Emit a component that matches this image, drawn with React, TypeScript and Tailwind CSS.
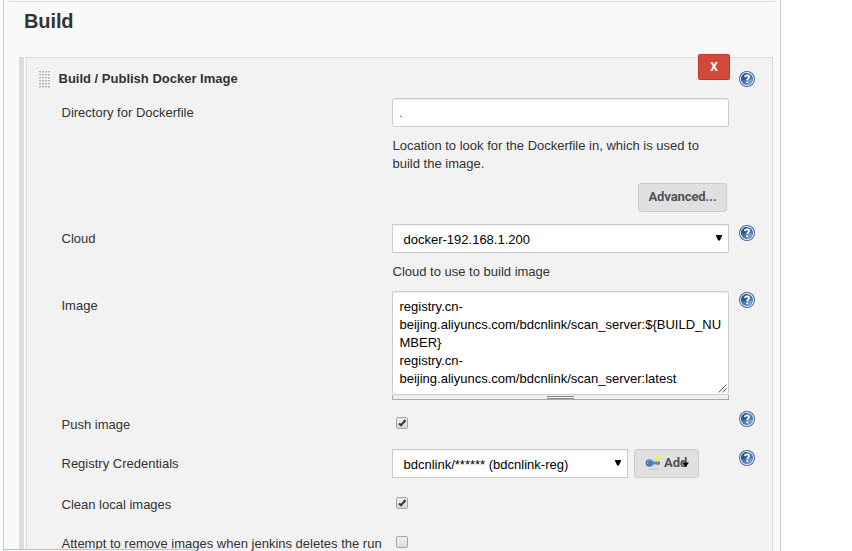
import type { ReactNode } from 'react';

function Help() {
  return (
    <svg className="block h-4 w-4" viewBox="0 0 16 16">
      <circle cx="8" cy="8" r="8" fill="#4169a3" />
      <circle cx="8" cy="8" r="7" fill="#f4f7fb" />
      <circle cx="8" cy="8" r="6.1" fill="#4d74ac" />
      <path d="M2.2 9.5A5.9 5.9 0 0 1 8 2.1v6z" fill="#2c5594" />
      <path d="M13.8 8A5.8 5.8 0 0 1 8 13.8L9 9z" fill="#7d9dca" />
      <path d="M5.9 6.1C6 3.7 10.2 3.7 10.1 6c0 1.5-2 1.5-2 3.2" fill="none" stroke="#fff" strokeWidth="1.7" />
      <rect x="7.2" y="10.4" width="1.8" height="1.8" fill="#fff" />
    </svg>
  );
}

function Check({ on = false }: { on?: boolean }) {
  return (
    <span className="ml-1 block h-[12px] w-[12px] rounded-[2px] border border-[#a6a6a6] bg-gradient-to-b from-[#f0f0f0] to-[#dcdcdc]">
      {on && (
        <svg className="block h-[10px] w-[10px]" viewBox="0 0 10 10">
          <path d="M1.9 5.5L4 7.3 8.5 2" fill="none" stroke="#3c3c3c" strokeWidth="2.2" />
        </svg>
      )}
    </span>
  );
}

function Row({ h, label, children, help, pad = 'pt-[6px]' }: { h: string; label: string; children?: ReactNode; help?: string; pad?: string }) {
  return (
    <div className={`flex shrink-0 items-start ${h}`}>
      <div className={`w-[331px] shrink-0 whitespace-nowrap pl-[0.5px] leading-[18px] ${pad}`}>{label}</div>
      <div className="w-[337px] shrink-0">{children}</div>
      {help !== undefined && <div className={`ml-[10px] ${help}`}><Help /></div>}
    </div>
  );
}

function Arrow() {
  return (
    <svg className="block h-[6px] w-[6px]" viewBox="0 0 6 6">
      <path d="M0 0h6v1L3.8 5.5H2.2L0 1z" fill="#000" />
    </svg>
  );
}

function Select({ w, text }: { w: string; text: string }) {
  return (
    <div className={`flex h-[29px] items-center justify-between border border-[#ccc] bg-white pl-[10.5px] pr-[6px] text-black shadow-[inset_0_1px_1px_rgba(0,0,0,0.075)] ${w}`}>
      <span className="pt-[2px]">{text}</span>
      <div className="pb-px"><Arrow /></div>
    </div>
  );
}

export default function App() {
  return (
    <div className="relative h-[551px] w-[852px] overflow-hidden bg-white font-['Liberation_Sans',Arial,sans-serif] text-[13px] text-[#333]">
      <div className="ml-[3px] flex h-full w-[778px] flex-col border-x border-[#ccc] bg-[#f9f9f9]">
        <div className="mx-[5px] mt-px h-px shrink-0 bg-[#ddd]" />
        <h1 className="h-[55px] shrink-0 pl-5 pt-[6px] text-[20px] font-bold leading-[26px] tracking-[-0.1px]">Build</h1>
        <div className="ml-[15px] flex h-[520px] w-[754px] shrink-0 bg-[#f9f9f9]">
          <div className="mr-[2px] w-[5px] shrink-0 bg-[#ddd]" />
          <div className="relative flex w-[747px] flex-col border border-[#d9d9d9] bg-[#f2f2f2]">
            <div className="absolute right-[42px] top-[-4px] flex h-[26px] w-8 items-center justify-center rounded-[2px] border border-[#c0392b] bg-[#d24939] font-['Roboto',sans-serif] text-[12px] font-bold text-white">X</div>
            <div className="flex h-10 shrink-0 items-start">
              <svg className="ml-[11px] mt-[12px] h-[18px] w-[13px] shrink-0" viewBox="0 0 13 18">
                <rect width="13" height="18" fill="#fafafa" />
                {[0, 1, 2, 3, 4, 5].map((r) =>
                  [0, 1, 2, 3].map((c) => <rect key={`${r}-${c}`} x={c * 3 + 1} y={r * 3 + 1} width="2" height="1.5" fill="#b0b0b0" />),
                )}
              </svg>
              <div className="ml-[7.5px] w-[661.5px] shrink-0 pt-[12px] font-bold leading-[18px]">Build / Publish Docker Image</div>
              <div className="ml-[19px] mt-[13px]"><Help /></div>
            </div>
            <div className="flex flex-col pl-[34px]">
              <Row h="h-[126px]" label="Directory for Dockerfile">
                <div className="flex h-[29px] items-center rounded-[3px] border border-[#ccc] bg-white pl-[6px] text-[#1583c4] shadow-[inset_0_1px_1px_rgba(0,0,0,0.075)]">.</div>
                <div className="mt-[10px] w-[325px] pl-[0.5px] leading-[18px]">Location to look for the Dockerfile in, which is used to<br />build the image.</div>
                <div className="ml-auto mr-[2px] mt-[10px] flex h-[29px] w-[89px] items-center justify-center rounded-[3px] border border-[#ccc] bg-[#e0e0e0] pb-px font-['Roboto',sans-serif] text-[13px] font-bold tracking-[-0.1px] text-[#4d545d]">Advanced...</div>
              </Row>
              <Row h="h-[67px]" label="Cloud" help="pt-px">
                <Select w="w-[337px]" text="docker-192.168.1.200" />
                <div className="mt-[10px] pl-[0.5px] leading-[18px]">Cloud to use to build image</div>
              </Row>
              <Row h="h-[120px]" label="Image" help="pt-px">
                <div className="relative h-[104px] rounded-[3px] border border-[#ccc] bg-white pl-[6.5px] pt-[6px] leading-[18px] text-black shadow-[inset_0_1px_1px_rgba(0,0,0,0.075)]">
                  registry.cn-<br />beijing.aliyuncs.com/bdcnlink/scan_server:$&#123;BUILD_NU<br />MBER&#125;<br />registry.cn-<br />beijing.aliyuncs.com/bdcnlink/scan_server:latest
                  <svg className="absolute bottom-[1px] right-[1px] h-[9px] w-[9px]" viewBox="0 0 9 9">
                    <path d="M.5 8.5l8-8M4.5 8.5l4-4" stroke="#555" />
                  </svg>
                </div>
                <div className="flex h-[5px] flex-col items-center border-x border-b border-[#aaa] bg-[#eee] pt-px">
                  <div className="h-[3px] w-[27px] border-y border-[#8b8b83]" />
                </div>
              </Row>
              <Row h="h-[38px]" label="Push image" help="pt-0" pad="pt-[5px]">
                <div className="pt-[6px]"><Check on /></div>
              </Row>
              <Row h="h-[41px]" label="Registry Credentials" help="pt-px">
                <div className="flex gap-[6px]">
                  <Select w="w-[236px]" text="bdcnlink/****** (bdcnlink-reg)" />
                  <div className="relative flex h-[29px] w-[65px] items-center rounded-[3px] border border-[#ccc] bg-[#e0e0e0] pb-px pl-[10px] font-['Roboto',sans-serif] font-bold text-[#4d545d]">
                    <svg className="mr-[3px] h-4 w-4" viewBox="0 0 16 16">
                      <ellipse cx="8" cy="14.5" rx="6" ry="0.8" fill="#c8c8c8" />
                      <circle cx="12.5" cy="3.5" r="2.5" fill="#f5ee45" />
                      <path d="M6 6.5h9v3h-1.5v.8H12v-.8H7z" fill="#5688bf" />
                      <ellipse cx="4.5" cy="8" rx="3.9" ry="3.7" fill="#447ab8" />
                      <path d="M2 6.5C4 5 6 5 8 7h6" fill="none" stroke="#86acd8" strokeWidth="0.8" />
                      <circle cx="2.8" cy="8" r="0.8" fill="#9bbbe0" />
                    </svg>
                    Add
                    <svg className="absolute right-[9px] top-[12px] h-[5px] w-[7px]" viewBox="0 0 7 5">
                      <path d="M0 .5h7L4 4.5H3z" fill="#000" />
                    </svg>
                  </div>
                </div>
              </Row>
              <Row h="h-[39px]" label="Clean local images">
                <div className="pt-[7px]"><Check on /></div>
              </Row>
              <Row h="h-[39px]" label="Attempt to remove images when jenkins deletes the run">
                <div className="pt-[7px]"><Check /></div>
              </Row>
            </div>
          </div>
        </div>
      </div>
      <div className="absolute left-[4px] top-[549px] h-[2px] w-[192px] rounded-tr-[2px] border-t border-[#a9cdbb] bg-[#f6faf7]" />
    </div>
  );
}
